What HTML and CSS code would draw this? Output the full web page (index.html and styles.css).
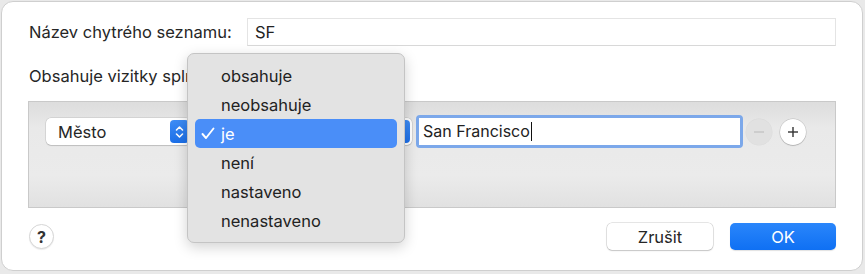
FILE: index.html
```html
<!DOCTYPE html>
<html>
<head>
    <link rel="stylesheet" href="styles.css">
</head>
<body>
    <div class="window">
        <div class="name-row">
            <label class="name-label" for="listName">Název chytrého seznamu:</label>
            <input class="name-input" type="text" id="listName" value="SF">
        </div>

        <div class="rule-title">Obsahuje vizitky splňující následující podmínku:</div>

        <div class="rules">
            <div class="rule">
                <div class="popup field-popup">
                    <span class="popup-text">Město</span>
                    <span class="stepper">
                        <svg width="9" height="14" viewBox="0 0 9 14"><polyline points="1.5,5 4.5,2 7.5,5" fill="none" stroke="#fff" stroke-width="1.6" stroke-linecap="round" stroke-linejoin="round"/><polyline points="1.5,9 4.5,12 7.5,9" fill="none" stroke="#fff" stroke-width="1.6" stroke-linecap="round" stroke-linejoin="round"/></svg>
                    </span>
                </div>
                <div class="popup op-popup">
                    <span class="stepper"></span>
                </div>
                <div class="value-ring">
                    <div class="value-field">San Francisco<span class="caret"></span></div>
                </div>
                <button type="button" class="round-btn minus">
                    <svg width="12" height="12" viewBox="0 0 12 12"><line x1="1" y1="6" x2="11" y2="6" stroke="#c4c4c4" stroke-width="1.4"/></svg>
                </button>
                <button type="button" class="round-btn plus">
                    <svg width="12" height="12" viewBox="0 0 12 12"><line x1="1" y1="6" x2="11" y2="6" stroke="#333" stroke-width="1.4"/><line x1="6" y1="1" x2="6" y2="11" stroke="#333" stroke-width="1.4"/></svg>
                </button>
            </div>
        </div>

        <div class="footer">
            <button type="button" class="help-btn">?</button>
            <div class="actions">
                <button type="button" class="btn">Zrušit</button>
                <button type="button" class="btn btn-primary">OK</button>
            </div>
        </div>

        <div class="menu">
            <div class="menu-item">obsahuje</div>
            <div class="menu-item">neobsahuje</div>
            <div class="menu-item selected">
                <svg class="check" width="14" height="13" viewBox="0 0 14 13"><polyline points="1.5,7 5,11 12.5,1.5" fill="none" stroke="#fff" stroke-width="1.9" stroke-linecap="round" stroke-linejoin="round"/></svg>
                je
            </div>
            <div class="menu-item">není</div>
            <div class="menu-item">nastaveno</div>
            <div class="menu-item">nenastaveno</div>
        </div>
    </div>
</body>
</html>
```

FILE: styles.css
```css
body {
    margin: 0;
    padding: 0;
    background-color: #e9e9e9;
    font-family: Inter, "Liberation Sans", Arial, sans-serif;
    font-size: 16.5px;
    color: #262626;
}
.window {
    position: relative;
    margin: 1px;
    box-sizing: border-box;
    width: 862px;
    height: 270px;
    padding: 16px 26px 0 26px;
    background-color: #fff;
    border: 1px solid #cfcfcf;
    border-radius: 12px;
}
.name-row {
    display: flex;
    align-items: center;
    height: 28px;
}
.name-label {
    margin-left: 1px;
    width: 218px;
    white-space: nowrap;
}
.name-input {
    flex: 1;
    height: 28px;
    box-sizing: border-box;
    padding: 0 7px;
    border: 1px solid #e4e4e4;
    border-bottom-color: #d8d8d8;
    background-color: #fff;
    font-family: inherit;
    font-size: 16.5px;
    color: #222;
    outline: none;
}
.rule-title {
    margin: 20px 0 0 1px;
    line-height: 20px;
    white-space: nowrap;
}
.rules {
    margin-top: 15px;
    height: 107px;
    box-sizing: border-box;
    padding: 13px 0 0 17px;
    border: 1px solid #c9c9c9;
    background: linear-gradient(180deg, #dddddd 0%, #e9e9e9 25%, #ebebeb 70%, #e1e1e1 100%);
}
.rule {
    display: flex;
    align-items: center;
    height: 33px;
}
.popup {
    display: flex;
    align-items: center;
    justify-content: space-between;
    height: 27px;
    box-sizing: border-box;
    padding: 0 2px 0 12px;
    background-color: #fff;
    border-radius: 5px;
    box-shadow: 0 0 0 0.5px rgba(0, 0, 0, 0.15), 0 1px 1px rgba(0, 0, 0, 0.12);
}
.field-popup {
    width: 145px;
}
.op-popup {
    justify-content: flex-end;
    width: 216px;
    margin-left: 5px;
}
.stepper {
    display: flex;
    align-items: center;
    justify-content: center;
    width: 19px;
    height: 23px;
    border-radius: 4px;
    background: linear-gradient(180deg, #3d8cf5, #1c6fe8);
}
.value-ring {
    margin-left: 4px;
    width: 327px;
    height: 33px;
    box-sizing: border-box;
    border: 3px solid #7ca8ea;
    border-radius: 4px;
}
.value-field {
    height: 27px;
    line-height: 27px;
    padding-left: 4px;
    background-color: #fff;
    font-size: 16px;
    color: #222;
}
.caret {
    display: inline-block;
    width: 1px;
    height: 19px;
    margin-left: 1px;
    vertical-align: -4px;
    background-color: #111;
}
.round-btn {
    display: flex;
    align-items: center;
    justify-content: center;
    width: 26px;
    height: 26px;
    padding: 0;
    border: none;
    border-radius: 50%;
}
.minus {
    margin-left: 3px;
    background-color: #e1e1e1;
    box-shadow: 0 0 0 0.5px rgba(0, 0, 0, 0.06);
}
.plus {
    margin-left: 8px;
    background-color: #fff;
    box-shadow: 0 0 0 0.5px rgba(0, 0, 0, 0.18), 0 1px 1px rgba(0, 0, 0, 0.15);
}
.footer {
    display: flex;
    align-items: center;
    justify-content: space-between;
    margin-top: 15px;
    height: 27px;
}
.help-btn {
    width: 25px;
    height: 25px;
    margin-left: 1px;
    padding: 0;
    border: 1px solid #d6d6d6;
    border-radius: 50%;
    background-color: #fff;
    font-family: inherit;
    font-size: 16px;
    font-weight: bold;
    color: #333;
    box-shadow: 0 1px 1px rgba(0, 0, 0, 0.08);
}
.actions {
    display: flex;
    gap: 17px;
}
.btn {
    width: 106px;
    height: 27px;
    padding: 0;
    border: none;
    border-radius: 5px;
    background-color: #fff;
    box-shadow: 0 0 0 0.5px rgba(0, 0, 0, 0.2), 0 1px 1.5px rgba(0, 0, 0, 0.15);
    font-family: inherit;
    font-size: 16.5px;
    color: #262626;
}
.btn-primary {
    background: linear-gradient(180deg, #2a86fb, #0f70f3);
    box-shadow: 0 1px 1px rgba(0, 0, 0, 0.12);
    color: #fff;
}
/* open popup menu covers the rest of the rule sentence */
.menu {
    position: absolute;
    left: 185px;
    top: 51px;
    width: 218px;
    height: 190px;
    box-sizing: border-box;
    padding: 7px 7px 0 7px;
    background-color: #e3e3e3;
    border: 1px solid #c4c4c4;
    border-radius: 7px;
    box-shadow: 0 4px 14px rgba(0, 0, 0, 0.18);
}
.menu-item {
    display: flex;
    align-items: center;
    height: 29px;
    padding-left: 26px;
    border-radius: 5px;
    font-size: 16.5px;
    color: #222;
}
.menu-item.selected {
    position: relative;
    background-color: #4a8ef8;
    color: #fff;
}
.check {
    position: absolute;
    left: 6px;
    top: 8px;
}
```
